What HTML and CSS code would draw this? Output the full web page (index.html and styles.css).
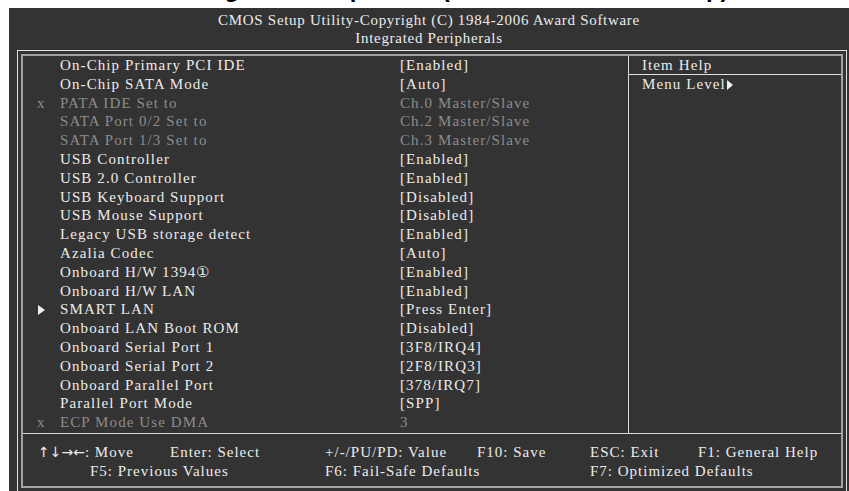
FILE: index.html
```html
<!DOCTYPE html>
<html lang="en">
<head>
    <meta charset="UTF-8">
    <meta name="viewport" content="width=device-width, initial-scale=1.0">
    <title>Integrated Peripherals</title>
    <link rel="stylesheet" href="styles.css">
</head>
<body>
    <div class="doc-title"><span>2-6 Integrated Peripherals (Onboard Devices Setup)</span></div>

    <div class="bios">
        <div class="bios-title">
            CMOS Setup Utility-Copyright (C) 1984-2006 Award Software<br>
            Integrated Peripherals
        </div>

        <div class="frame">
            <div class="inner">
                <div class="main">
                    <ul class="items">
                        <li class="item"><span class="mark"></span><span>On-Chip Primary PCI IDE</span><span>[Enabled]</span></li>
                        <li class="item"><span class="mark"></span><span>On-Chip SATA Mode</span><span>[Auto]</span></li>
                        <li class="item off"><span class="mark">x</span><span>PATA IDE Set to</span><span>Ch.0 Master/Slave</span></li>
                        <li class="item off"><span class="mark"></span><span>SATA Port 0/2 Set to</span><span>Ch.2 Master/Slave</span></li>
                        <li class="item off"><span class="mark"></span><span>SATA Port 1/3 Set to</span><span>Ch.3 Master/Slave</span></li>
                        <li class="item"><span class="mark"></span><span>USB Controller</span><span>[Enabled]</span></li>
                        <li class="item"><span class="mark"></span><span>USB 2.0 Controller</span><span>[Enabled]</span></li>
                        <li class="item"><span class="mark"></span><span>USB Keyboard Support</span><span>[Disabled]</span></li>
                        <li class="item"><span class="mark"></span><span>USB Mouse Support</span><span>[Disabled]</span></li>
                        <li class="item"><span class="mark"></span><span>Legacy USB storage detect</span><span>[Enabled]</span></li>
                        <li class="item"><span class="mark"></span><span>Azalia Codec</span><span>[Auto]</span></li>
                        <li class="item"><span class="mark"></span><span>Onboard H/W 1394①</span><span>[Enabled]</span></li>
                        <li class="item"><span class="mark"></span><span>Onboard H/W LAN</span><span>[Enabled]</span></li>
                        <li class="item"><span class="mark"><svg class="tri" width="7" height="10" viewBox="0 0 7 10"><path d="M0 0 L7 5 L0 10 Z" fill="#f0f0f0"/></svg></span><span>SMART LAN</span><span>[Press Enter]</span></li>
                        <li class="item"><span class="mark"></span><span>Onboard LAN Boot ROM</span><span>[Disabled]</span></li>
                        <li class="item"><span class="mark"></span><span>Onboard Serial Port 1</span><span>[3F8/IRQ4]</span></li>
                        <li class="item"><span class="mark"></span><span>Onboard Serial Port 2</span><span>[2F8/IRQ3]</span></li>
                        <li class="item"><span class="mark"></span><span>Onboard Parallel Port</span><span>[378/IRQ7]</span></li>
                        <li class="item"><span class="mark"></span><span>Parallel Port Mode</span><span>[SPP]</span></li>
                        <li class="item off"><span class="mark">x</span><span>ECP Mode Use DMA</span><span>3</span></li>
                    </ul>

                    <div class="help">
                        <div class="help-head">Item Help</div>
                        <div class="help-body">Menu Level<svg class="tri-small" width="6" height="10" viewBox="0 0 6 10"><path d="M0 0 L6 5 L0 10 Z" fill="#f0f0f0"/></svg></div>
                    </div>
                </div>

                <div class="keys">
                    <span class="k-move"><span class="arrows">↑↓→←</span>: Move</span>
                    <span class="k-enter">Enter: Select</span>
                    <span class="k-value">+/-/PU/PD: Value</span>
                    <span class="k-save">F10: Save</span>
                    <span class="k-exit">ESC: Exit</span>
                    <span class="k-help">F1: General Help</span>
                    <span class="k-prev">F5: Previous Values</span>
                    <span class="k-fail">F6: Fail-Safe Defaults</span>
                    <span class="k-opt">F7: Optimized Defaults</span>
                </div>
            </div>
        </div>
    </div>
</body>
</html>
```

FILE: styles.css
```css
body {
    margin: 0;
    background-color: #fff;
    overflow: hidden;
    font-family: "Liberation Serif", "DejaVu Serif", serif;
}

.doc-title {
    height: 8px;
    overflow: hidden;
    text-align: center;
    padding-left: 20px;
}

.doc-title span {
    display: block;
    margin-top: -23px;
    font-family: "Liberation Sans", Arial, sans-serif;
    font-weight: bold;
    font-size: 24px;
    line-height: 24px;
    color: #000;
}

.bios {
    margin-left: 9px;
    height: 483px;
    background-color: #333;
    color: #ececec;
    font-size: 15px;
    overflow: hidden;
}

.bios-title {
    padding-top: 3px;
    text-align: center;
    line-height: 18px;
    letter-spacing: 0.7px;
}

.frame {
    margin: 3px 2px 0 8px;
    border: 1px solid #e2e2e2;
    padding: 3px;
}

.inner {
    border: 2px solid #a3a3a3;
}

.main {
    display: grid;
    grid-template-columns: 606px 1fr;
    border-bottom: 1px solid #d8d8d8;
}

.items {
    list-style: none;
    margin: 0;
    padding: 0 0 1px 0;
    border-right: 1px solid #d8d8d8;
}

.item {
    display: grid;
    grid-template-columns: 37px 340px 1fr;
    line-height: 18.8px;
    height: 18.8px;
    letter-spacing: 1.1px;
    white-space: nowrap;
}

.item.off {
    color: #8c8c8c;
}

.mark {
    padding-left: 14px;
}

.tri {
    margin-left: 1px;
    vertical-align: -1px;
}

.help {
    letter-spacing: 1.1px;
}

.help-head {
    height: 18px;
    line-height: 18.8px;
    padding-left: 13px;
    border-bottom: 1px solid #e2e2e2;
}

.help-body {
    line-height: 18.8px;
    padding-left: 13px;
}

.tri-small {
    margin-left: 1px;
    vertical-align: -1px;
}

.keys {
    display: grid;
    grid-template-columns: 52px 80px 155px 152px 113px 108px auto;
    grid-auto-rows: 19px;
    line-height: 19px;
    padding: 9px 0 5px 15px;
    letter-spacing: 1px;
    white-space: nowrap;
}

.arrows {
    font-family: "DejaVu Sans", sans-serif;
    font-size: 14px;
    letter-spacing: 0;
}

.k-move { grid-column: 1 / 3; grid-row: 1; }
.k-enter { grid-column: 3; grid-row: 1; }
.k-value { grid-column: 4; grid-row: 1; }
.k-save { grid-column: 5; grid-row: 1; }
.k-exit { grid-column: 6; grid-row: 1; }
.k-help { grid-column: 7; grid-row: 1; }
.k-prev { grid-column: 2 / 4; grid-row: 2; }
.k-fail { grid-column: 4 / 6; grid-row: 2; }
.k-opt { grid-column: 6 / 8; grid-row: 2; }
```
